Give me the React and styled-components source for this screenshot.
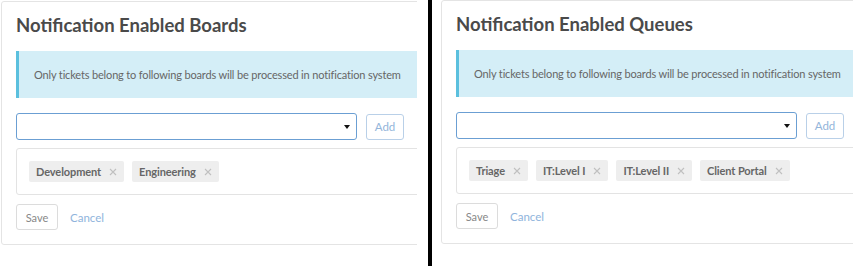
import React from "react";
import styled, { createGlobalStyle } from "styled-components";

const GlobalStyle = createGlobalStyle`
  html, body {
    margin: 0;
    padding: 0;
    background: #ffffff;
  }
  body {
    font-family: Lato, "Open Sans", sans-serif;
    color: #555;
  }
`;

const Page = styled.div`
  display: flex;
  width: 855px;
  height: 266px;
  overflow: hidden;
  background: #fff;
`;

const Frame = styled.div`
  width: ${(p) => p.$width}px;
  flex-shrink: 0;
  padding-left: ${(p) => p.$left}px;
  padding-top: ${(p) => p.$top}px;
  box-sizing: border-box;
`;

const Clip = styled.div`
  width: ${(p) => p.$clip}px;
  overflow: hidden;
`;

const Divider = styled.div`
  width: 4px;
  flex-shrink: 0;
  background: #000;
`;

const Card = styled.div`
  width: 520px;
  border: 1px solid #e4e4e4;
  border-radius: 3px;
  padding: 11px 14px 14px;
  box-sizing: border-box;
  background: #fff;
`;

const Title = styled.h2`
  margin: 0;
  font-size: 18.5px;
  line-height: 24px;
  font-weight: 700;
  color: #4a4a4a;
`;

const Alert = styled.div`
  margin-top: 14px;
  background: #d4eef7;
  border-left: 3px solid #5bc0de;
  padding: 15px 15px 15px 15px;
  font-size: 11px;
  letter-spacing: -0.16px;
  line-height: 17px;
  color: #666;
  white-space: nowrap;
`;

const Row = styled.div`
  display: flex;
  align-items: center;
  margin-top: 15px;
`;

const SelectBox = styled.div`
  position: relative;
  width: 341px;
  height: 27px;
  border: 1px solid #6b9fd3;
  border-radius: 3px;
  box-sizing: border-box;
  background: #fff;

  &::after {
    content: "";
    position: absolute;
    right: 6px;
    top: 11px;
    border-left: 3px solid transparent;
    border-right: 3px solid transparent;
    border-top: 4px solid #111;
  }
`;

const AddButton = styled.button`
  margin-left: 9px;
  width: 38px;
  height: 26px;
  border: 1px solid #b9d0e8;
  border-radius: 3px;
  background: #fff;
  color: #93b5da;
  font-family: Lato, sans-serif;
  font-size: 11.5px;
  padding: 0;
`;

const TagBox = styled.div`
  margin-top: 8px;
  display: flex;
  gap: 8px;
  border: 1px solid #e3e3e3;
  border-radius: 3px;
  padding: 12px 12px;
  min-height: 21px;
`;

const Tag = styled.span`
  display: inline-flex;
  align-items: center;
  height: 21px;
  padding: 0 7px 0 7px;
  background: #eeeeee;
  border-radius: 2px;
  font-size: 11px;
  font-weight: 700;
  letter-spacing: -0.1px;
  color: #666;
`;

const Remove = styled.svg`
  margin-left: 8px;
  width: 8px;
  height: 8px;
`;

const Footer = styled.div`
  display: flex;
  align-items: center;
  margin-top: 9px;
`;

const SaveButton = styled.button`
  width: 42px;
  height: 26px;
  border: 1px solid #dcdcdc;
  border-radius: 3px;
  background: #fff;
  color: #888;
  font-family: Lato, sans-serif;
  font-size: 11px;
  padding: 0;
`;

const CancelLink = styled.a`
  margin-left: 12px;
  color: #8fb4dc;
  font-size: 11.5px;
  text-decoration: none;
`;

const X = () => (
  <Remove viewBox="0 0 8 8">
    <path d="M1 1 L7 7 M7 1 L1 7" stroke="#c0c0c0" strokeWidth="1.1" />
  </Remove>
);

function Panel({ title, tags }) {
  return (
    <Card>
      <Title>{title}</Title>
      <Alert>
        Only tickets belong to following boards will be processed in notification system
      </Alert>
      <Row>
        <SelectBox />
        <AddButton>Add</AddButton>
      </Row>
      <TagBox>
        {tags.map((t) => (
          <Tag key={t}>
            {t}
            <X />
          </Tag>
        ))}
      </TagBox>
      <Footer>
        <SaveButton>Save</SaveButton>
        <CancelLink href="#">Cancel</CancelLink>
      </Footer>
    </Card>
  );
}

export default function App() {
  return (
    <>
      <GlobalStyle />
      <Page>
        <Frame $width={428} $left={1} $top={1}>
          <Clip $clip={416}>
            <Panel title="Notification Enabled Boards" tags={["Development", "Engineering"]} />
          </Clip>
        </Frame>
        <Divider />
        <Frame $width={423} $left={9} $top={0}>
          <Clip $clip={412}>
            <Panel
              title="Notification Enabled Queues"
              tags={["Triage", "IT:Level I", "IT:Level II", "Client Portal"]}
            />
          </Clip>
        </Frame>
      </Page>
    </>
  );
}
